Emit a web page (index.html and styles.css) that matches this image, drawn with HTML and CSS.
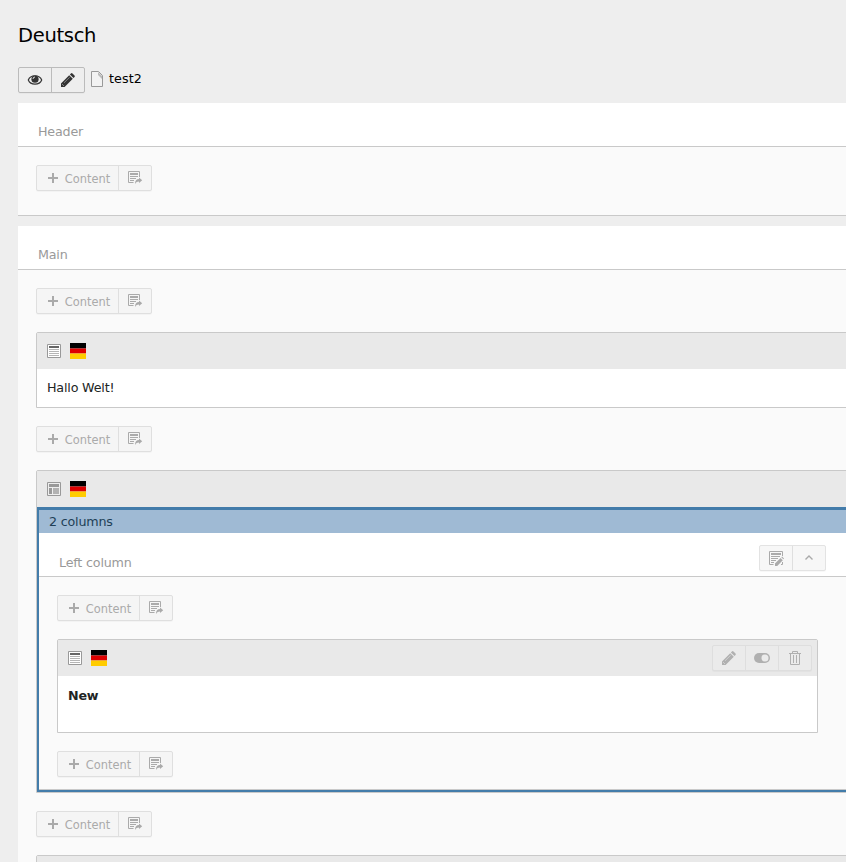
FILE: index.html
```
<!DOCTYPE html>
<html lang="de">
<head>
<meta charset="utf-8">
<title>Deutsch</title>
<link rel="stylesheet" href="styles.css">
</head>
<body>
<svg class="defs" width="0" height="0" aria-hidden="true">
  <symbol id="paste" viewBox="0 0 16 16"><path fill="none" stroke="currentColor" d="M6.500 12.500H1.500V1.500H12.500V7"/><path fill="currentColor" d="M3 3h8v2H3zM3 6h8v1H3zM3 8h6v1H3zM3 10h4v1H3zM8 14c0-3.500 1.500-5 4-5V7.500l3.200 2.700L12 13v-1.600c-2 0-3 .7-4 2.600z"/></symbol>
  <symbol id="pencil" viewBox="0 0 16 16"><path fill="currentColor" d="M1 15v-3.600L9.200 3.200l3.600 3.600L4.600 15zM9.900 2.500l1-1q.8-.8 1.600 0l2 2q.8.800 0 1.600l-1 1z"/><path stroke="#fff" stroke-opacity=".5" stroke-width=".8" d="M4 10.800 9.700 5.200M2 12l2 2"/></symbol>
  <symbol id="text" viewBox="0 0 16 16"><path fill="#fff" stroke="#999" d="M1.500 1.500h13v13h-13z"/><path fill="#666" d="M3 3h10v2H3z"/><path fill="#b5b5b5" d="M3 6h10v1H3zM3 8h10v1H3zM3 10h10v1H3zM3 12h10v1H3z"/></symbol>
  <symbol id="columns" viewBox="0 0 16 16"><path fill="#eee" stroke="#999" d="M1.500 1.500h13v13h-13z"/><path fill="#999" d="M3 3h10v3H3zM3 7h3v6H3z"/><path fill="#b2b2b2" d="M7 7h6v6H7z"/></symbol>
  <symbol id="flag" viewBox="0 0 16 16"><path d="M0 0h16v5.500H0z"/><path fill="#d00" d="M0 5.500h16v5H0z"/><path fill="#fc0" d="M0 10.500h16V16H0z"/></symbol>
  <symbol id="plus" viewBox="0 0 16 16"><path fill="currentColor" d="M7 3h2v4h4v2H9v4H7V9H3V7h4z"/></symbol>
</svg>
<main class="page">
  <h1>Deutsch</h1>
  <div class="record">
    <div class="group strong">
      <span class="btn"><svg viewBox="0 0 16 16"><path fill="none" stroke="currentColor" stroke-width="1.200" d="M1.300 8C3.500 2.300 12.500 2.300 14.700 8 12.500 13.500 3.500 13.500 1.300 8z"/><circle cx="8" cy="7.200" r="3.600" fill="currentColor"/><path fill="none" stroke="#eee" stroke-width=".9" d="M6 7a2 2 0 0 1 2-2"/></svg></span>
      <span class="btn"><svg><use href="#pencil"/></svg></span>
    </div>
    <svg class="file" viewBox="0 0 12 16"><path fill="#f2f2f2" stroke="#999" d="M.5.500h7l4 4v11H.5z"/><path fill="#bbb" d="M7 1l4 4v3L7 4z"/></svg>
    <span>test2</span>
  </div>

  <section class="area first">
    <h2>Header</h2>
    <div class="group add"><span class="btn label"><svg><use href="#plus"/></svg><span>Content</span></span><span class="btn"><svg><use href="#paste"/></svg></span></div>
  </section>

  <section class="area main">
    <h2>Main</h2>
    <div class="group add"><span class="btn label"><svg><use href="#plus"/></svg><span>Content</span></span><span class="btn"><svg><use href="#paste"/></svg></span></div>
    <article class="card">
      <header><svg><use href="#text"/></svg><svg><use href="#flag"/></svg></header>
      <p>Hallo Welt!</p>
    </article>
    <div class="group add"><span class="btn label"><svg><use href="#plus"/></svg><span>Content</span></span><span class="btn"><svg><use href="#paste"/></svg></span></div>
    <article class="card">
      <header><svg><use href="#columns"/></svg><svg><use href="#flag"/></svg></header>
      <div class="container">
        <div class="strip">2 columns</div>
        <div class="nested">
          <div class="nested-head">
            <h2>Left column</h2>
            <div class="group column-tools">
              <span class="btn"><svg viewBox="0 0 16 16"><path fill="none" stroke="currentColor" d="M5.500 14.500H1.500v-13h13V6M13 14.500h1.500V12"/><path fill="currentColor" d="M3 3h10v2H3zM3 6h9v1H3zM3 8h7v1H3zM3 10h5v1H3zM3 12h3v1H3zM7 16v-2.500l5.500-5.500 2.300 2.300L9.200 16zM13.300 7.300l.8-.8 2 2-.8.800z"/></svg></span>
              <span class="btn"><svg viewBox="0 0 16 16"><path fill="none" stroke="currentColor" stroke-width="1.400" d="m4.500 9.500 3.500-3.500 3.500 3.500"/></svg></span>
            </div>
          </div>
          <div class="group add"><span class="btn label"><svg><use href="#plus"/></svg><span>Content</span></span><span class="btn"><svg><use href="#paste"/></svg></span></div>
          <article class="card inner">
            <header><svg><use href="#text"/></svg><svg><use href="#flag"/></svg>
              <div class="group card-tools">
                <span class="btn"><svg><use href="#pencil"/></svg></span>
                <span class="btn"><svg viewBox="0 0 16 16"><rect y="3" width="16" height="10" rx="5" fill="currentColor"/><circle cx="11" cy="8" r="3.500" fill="#ebebeb"/></svg></span>
                <span class="btn"><svg viewBox="0 0 16 16"><path fill="none" stroke="currentColor" d="M2 3.500h12M5.500 3V1.500h5V3M3.500 4v10.500h9V4M6.500 5v8M9.500 5v8"/></svg></span>
              </div>
            </header>
            <p><strong>New</strong></p>
          </article>
          <div class="group add"><span class="btn label"><svg><use href="#plus"/></svg><span>Content</span></span><span class="btn"><svg><use href="#paste"/></svg></span></div>
        </div>
      </div>
    </article>
    <div class="group add"><span class="btn label"><svg><use href="#plus"/></svg><span>Content</span></span><span class="btn"><svg><use href="#paste"/></svg></span></div>
    <article class="card last"><header></header></article>
  </section>
</main>
</body>
</html>
```
FILE: styles.css
```
* { box-sizing: border-box; }
html { overflow: hidden; }
body { margin: 0; height: 862px; overflow: hidden; background: #eee; color: #000; font: 12.7px/18px "DejaVu Sans", sans-serif; letter-spacing: -.18px; }
.defs { display: none; }
svg { display: block; flex: none; width: 16px; height: 16px; }
.page { width: 846px; height: 862px; overflow: hidden; padding: 24px 0 0 18px; }
h1 { margin: 0; font-size: 19.5px; font-weight: 400; line-height: 24px; letter-spacing: -.3px; }
h2 { margin: 0; height: 44px; padding: 20px 0 0 20px; border-bottom: 1px solid #c9c9c9; background: #fff; color: #999; font-size: 12.7px; font-weight: 400; line-height: 18px; }
.record { display: flex; align-items: center; height: 26px; margin: 19px 0 10px; }
.record > span { padding-bottom: 3px; letter-spacing: .1px; }
.file { width: 12px; margin: 0 6px 2px; }
.group { display: inline-flex; height: 26px; border: 1px solid #dfdfdf; border-radius: 2px; background: #f5f5f5; color: #aaa; box-shadow: 0 1px 1px rgba(0,0,0,.03); }
.btn { display: flex; align-items: center; justify-content: center; width: 33px; }
.btn + .btn { border-left: 1px solid #dfdfdf; }
.btn.label { width: 81px; gap: 4px; font-size: 11.4px; letter-spacing: 0; }
.label span { padding-top: 1px; }
.group.strong { border-color: #bbb; background: #eee; color: #333; }
.group.strong .btn { width: 32px; }
.group.strong .btn + .btn { width: 33px; border-color: #bbb; }
.area { width: 884px; background: #fafafa; border-bottom: 1px solid #c9c9c9; }
.area.first { height: 113px; }
.area.main { height: 660px; margin-top: 10px; }
.add { display: flex; width: 116px; margin: 18px 0 18px 18px; }
.card { margin: 0 18px; border: 1px solid #c9c9c9; border-radius: 2px 2px 0 0; background: #fff; }
.card header { display: flex; align-items: center; gap: 8px; height: 36px; padding: 0 5px 0 9px; background: #e9e9e9; }
.card p { height: 38px; margin: 0; padding: 10px; color: #212424; }
.container { border: solid #437caa; border-width: 3px 2px 2px; }
.strip { height: 23px; padding: 3px 10px; background: #9fbad4; color: #213f57; }
.nested { height: 257px; background: #fafafa; border-bottom: 1px solid #c9c9c9; }
.nested-head { position: relative; }
.nested-head h2 { padding-top: 21px; }
.column-tools { position: absolute; top: 12px; left: 720px; background: #f7f7f7; border-color: #e3e3e3; }
.card.inner { width: 761px; height: 94px; }
.card-tools { margin-left: auto; border-color: #dedede; background: #ebebeb; color: #b0b0b0; }
.card-tools .btn + .btn { border-color: #dedede; }
.card-tools .btn:first-child, .column-tools .btn:first-child { width: 32px; }
.nested .card p { padding-top: 11px; }
.nested .label span { padding-top: 2px; }
```
